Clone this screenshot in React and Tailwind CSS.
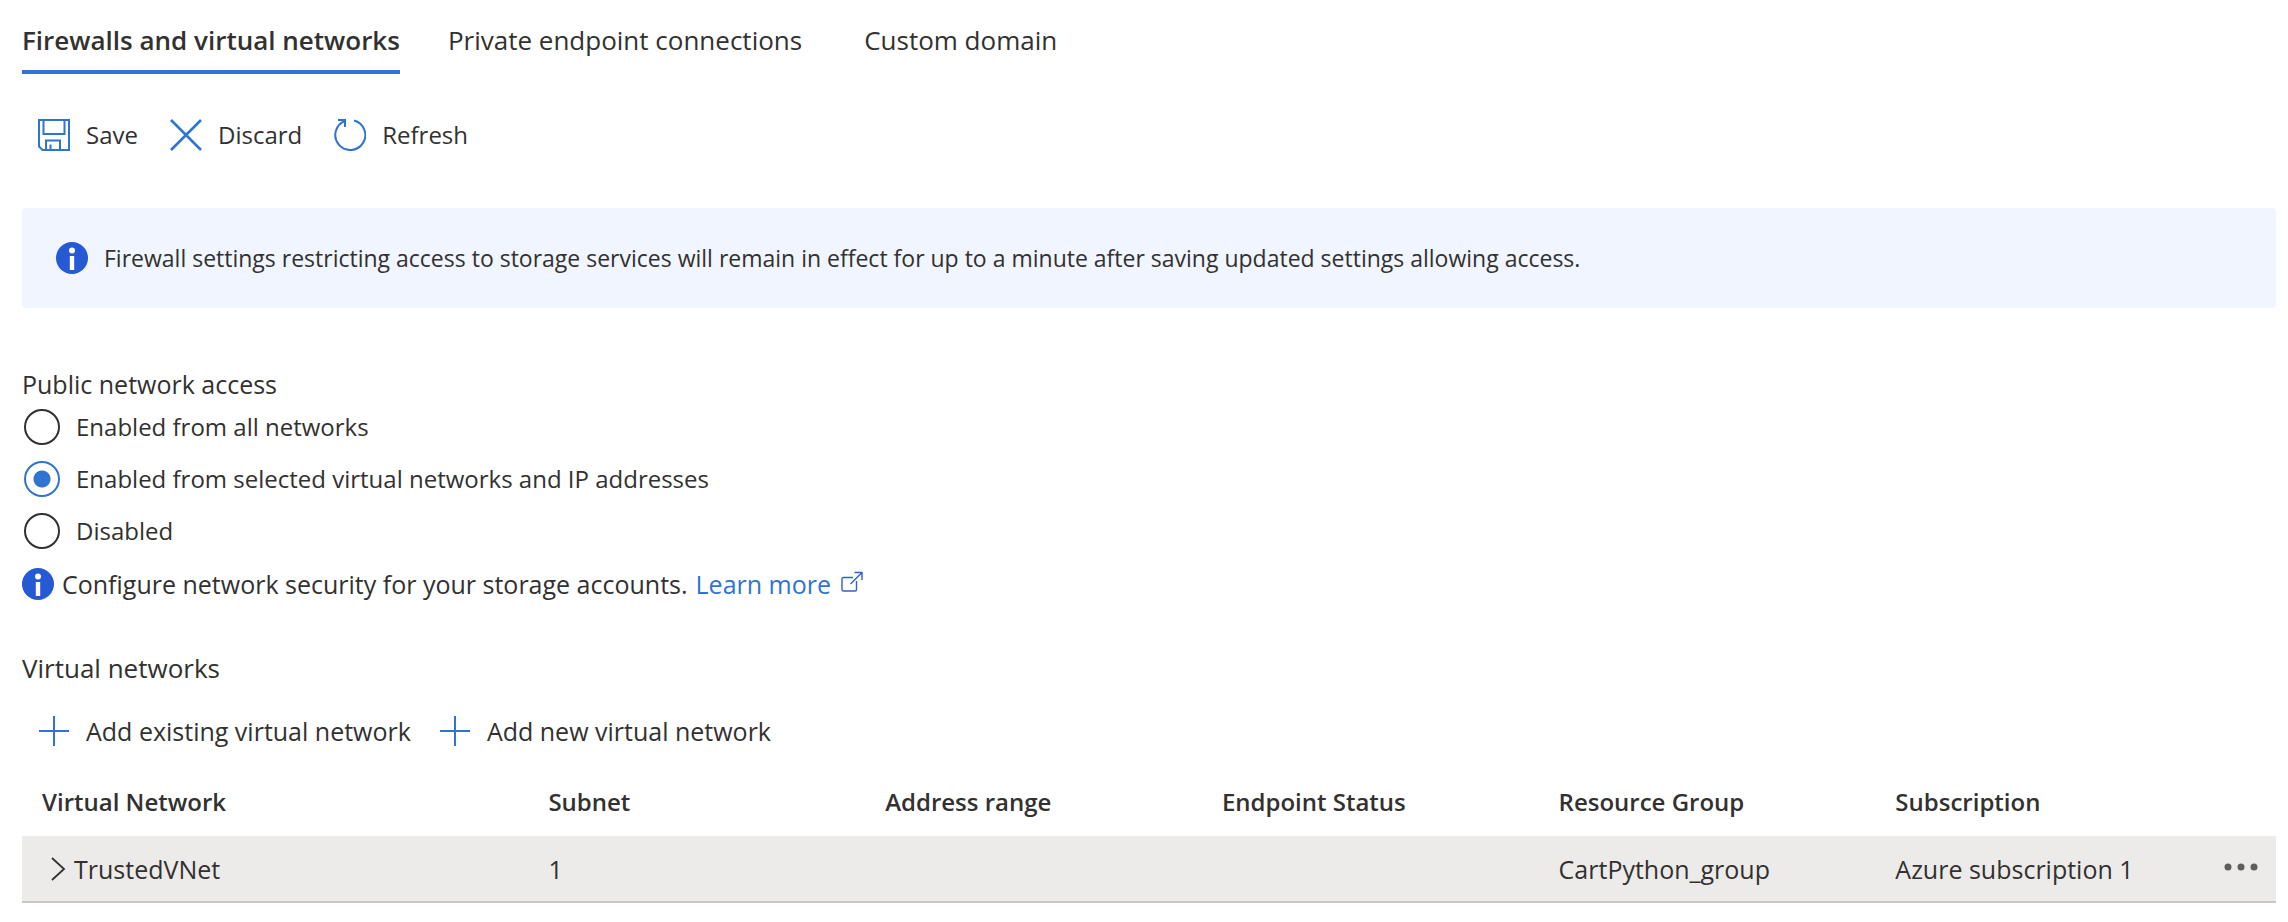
import React from "react";

const BLUE = "#2f74d0";

function InfoIcon() {
  return (
    <svg viewBox="0 0 32 32" className="size-8 shrink-0" aria-hidden="true">
      <circle cx="16" cy="16" r="16" fill="#2659d4" />
      <circle cx="16" cy="8.5" r="3" fill="#fff" />
      <rect x="13.8" y="14" width="4.4" height="14" fill="#fff" />
    </svg>
  );
}

function SaveIcon() {
  return (
    <svg viewBox="0 0 32 32" className="size-8 shrink-0" fill="none" stroke={BLUE} strokeWidth="2" aria-hidden="true">
      <path d="M1 1H31V31H4.5L1 27.5Z" />
      <path d="M5.500 1V15H26.500V1" />
      <path d="M8 31V21.500H22V31M12.500 31V25.500" />
    </svg>
  );
}

function DiscardIcon() {
  return (
    <svg viewBox="0 0 32 32" className="size-8 shrink-0" fill="none" stroke={BLUE} strokeWidth="2.6" aria-hidden="true">
      <path d="M1 1L31 31M31 1L1 31" />
    </svg>
  );
}

function RefreshIcon() {
  return (
    <svg viewBox="0 0 32 32" className="size-8 shrink-0" fill="none" stroke={BLUE} strokeWidth="2" aria-hidden="true">
      <path d="M20 1.500A15 15 0 1 1 11 2" />
      <path d="M4 1H11V8" />
    </svg>
  );
}

function PlusIcon() {
  return (
    <svg viewBox="0 0 32 32" className="size-8 shrink-0" fill="none" stroke={BLUE} strokeWidth="2" aria-hidden="true">
      <path d="M16 1V31M1 16H31" />
    </svg>
  );
}

function ExternalIcon() {
  return (
    <svg viewBox="0 0 22 22" className="mb-1 size-[22px] shrink-0" fill="none" stroke="#2f5fd6" strokeWidth="1.4" aria-hidden="true">
      <path d="M12 6.500H2.500Q1 6.500 1 8V18.500Q1 20 2.500 20H14Q15.500 20 15.500 18.500V10" />
      <path d="M13.500 1.500H21V9M21 1.500L9.500 13" />
    </svg>
  );
}

function Command({ icon, children }) {
  return (
    <button type="button" className="flex items-center gap-4">
      {icon}
      <span>{children}</span>
    </button>
  );
}

const tabs = ["Firewalls and virtual networks", "Private endpoint connections", "Custom domain"];
const options = ["Enabled from all networks", "Enabled from selected virtual networks and IP addresses", "Disabled"];

export default function App() {
  const [selected, setSelected] = React.useState(1);
  return (
    <main className="pl-[22px] pr-3 pt-5 font-['Open_Sans','Noto_Sans',sans-serif] text-[25px] leading-[34px] text-[#323130]">
      <nav className="flex gap-12 text-[26px] leading-[40px]">
        {tabs.map((tab, i) => (
          <a
            key={tab}
            href="#"
            data-label={tab}
            className={
              (i === 0 ? "border-b-4 border-[#2f74d0] font-semibold " : "") +
              "pb-[10px] after:invisible after:block after:h-0 after:overflow-hidden after:font-semibold after:content-[attr(data-label)]"
            }
          >
            {tab}
          </a>
        ))}
      </nav>

      <div className="mt-11 flex gap-8 px-4 text-[24px]">
        <Command icon={<SaveIcon />}>Save</Command>
        <Command icon={<DiscardIcon />}>Discard</Command>
        <Command icon={<RefreshIcon />}>Refresh</Command>
      </div>

      <div className="mt-14 flex min-h-[100px] items-center gap-4 rounded bg-[#f0f5ff] px-[34px] text-[23px]">
        <InfoIcon />
        <p>Firewall settings restricting access to storage services will remain in effect for up to a minute after saving updated settings allowing access.</p>
      </div>

      <fieldset className="mt-[59px]">
        <legend>Public network access</legend>
        <div className="mt-2 flex flex-col gap-4 text-[24px]">
          {options.map((option, i) => (
            <label key={option} className="flex h-9 items-center gap-4 pl-[2px]">
              <input
                type="radio"
                name="access"
                checked={selected === i}
                onChange={() => setSelected(i)}
                className="size-9 shrink-0 appearance-none rounded-full border-2 border-[#323130] bg-white checked:border-[#2f74d0] checked:bg-[radial-gradient(circle,#2f74d0_8px,transparent_9px)]"
              />
              <span>{option}</span>
            </label>
          ))}
        </div>
      </fieldset>

      <div className="mt-[18px] flex items-center gap-2">
        <InfoIcon />
        <p>Configure network security for your storage accounts.</p>
        <a href="#" className="flex items-center gap-[10px] text-[#2f74d0]">
          Learn more
          <ExternalIcon />
        </a>
      </div>

      <h2 className="mt-[50px] text-[26px]">Virtual networks</h2>

      <div className="mt-[29px] flex gap-7 px-4">
        <Command icon={<PlusIcon />}>Add existing virtual network</Command>
        <Command icon={<PlusIcon />}>Add new virtual network</Command>
      </div>

      <table className="mt-5 w-full table-fixed text-left">
        <colgroup>
          <col className="w-[23%]" />
          <col className="w-[14.94%]" />
          <col className="w-[14.94%]" />
          <col className="w-[14.94%]" />
          <col className="w-[14.94%]" />
          <col />
          <col className="w-[52px]" />
        </colgroup>
        <thead className="text-[24px]">
          <tr className="h-[68px]">
            <th className="pl-5 font-semibold">Virtual Network</th>
            <th className="pl-2 font-semibold">Subnet</th>
            <th className="pl-2 font-semibold">Address range</th>
            <th className="pl-2 font-semibold">Endpoint Status</th>
            <th className="pl-2 font-semibold">Resource Group</th>
            <th className="pl-2 font-semibold">Subscription</th>
            <th aria-label="Actions" />
          </tr>
        </thead>
        <tbody>
          <tr className="h-[66px] border-b-2 border-[#c8c8c5] bg-[#edebe9]">
            <td className="pl-7">
              <button type="button" className="flex items-center gap-2">
                <svg viewBox="0 0 16 24" className="h-6 w-4" fill="none" stroke="#323130" strokeWidth="1.8" aria-hidden="true">
                  <path d="M2 1L14 12L2 23" />
                </svg>
                TrustedVNet
              </button>
            </td>
            <td className="pl-2">1</td>
            <td />
            <td />
            <td className="pl-2">CartPython_group</td>
            <td className="pl-2">Azure subscription 1</td>
            <td>
              <button type="button" aria-label="More" className="flex items-center pb-1">
                <svg viewBox="0 0 34 8" className="h-2 w-[34px]" fill="#605e5c" aria-hidden="true">
                  <circle cx="4" cy="4" r="3.500" />
                  <circle cx="17" cy="4" r="3.500" />
                  <circle cx="30" cy="4" r="3.500" />
                </svg>
              </button>
            </td>
          </tr>
        </tbody>
      </table>
    </main>
  );
}
